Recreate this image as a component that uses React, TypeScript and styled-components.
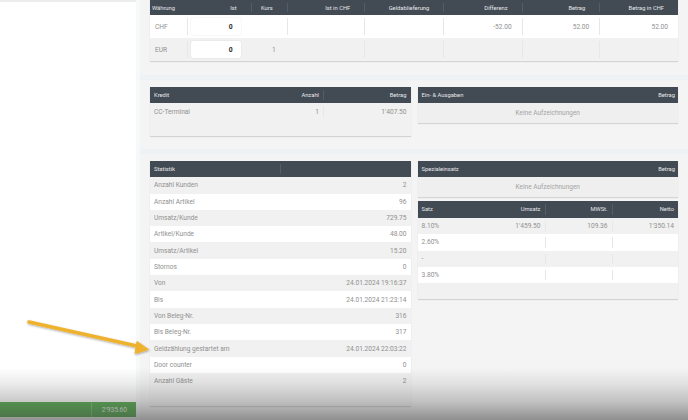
import styled, { createGlobalStyle } from "styled-components";

const GlobalStyle = createGlobalStyle`
  html, body {
    margin: 0;
    padding: 0;
  }
  body {
    width: 688px;
    height: 420px;
    overflow: hidden;
    font-family: Roboto, "Liberation Sans", sans-serif;
    background: #f6f8f9;
    color: #8b8b8b;
  }
  * {
    box-sizing: border-box;
  }
`;

const Page = styled.div`
  position: relative;
  display: flex;
  height: 420px;
  overflow: hidden;
`;

const Sidebar = styled.aside`
  width: 136px;
  flex: none;
  background: #fff;
  border-top: 2px solid #ececec;
  display: flex;
  flex-direction: column;
  justify-content: flex-end;
  padding-bottom: 3px;
`;

const TotalBar = styled.div`
  height: 15px;
  display: grid;
  grid-template-columns: 91px 1fr;
  background: #5cb055;
  color: #eef7ec;
  font-size: 6.6px;
`;

const TotalCell = styled.div`
  display: flex;
  align-items: center;
  justify-content: flex-end;
  padding-right: 9px;
  & + & {
    border-left: 1px solid rgba(255, 255, 255, 0.25);
  }
`;

const Gutter = styled.div`
  width: 4px;
  flex: none;
  background: #f6f9fa;
`;

const Main = styled.main`
  flex: 1;
  display: flex;
  flex-direction: column;
  gap: 5px;
  background: #eef2f4;
`;

const Section = styled.section<{ $pad: string }>`
  background: #f4f4f4;
  padding: ${(p) => p.$pad};
`;

const Split = styled.div`
  display: grid;
  grid-template-columns: 1fr 1fr;
  gap: 7px;
  align-items: start;
`;

const Stack = styled.div`
  display: flex;
  flex-direction: column;
  gap: 4px;
`;

const Card = styled.div<{ $padBottom?: number }>`
  background: #f1f1f1;
  box-shadow: 0 1px 1px rgba(0, 0, 0, 0.13);
  padding-bottom: ${(p) => p.$padBottom ?? 0}px;
`;

const HeadRow = styled.div<{ $cols: string; $h: number }>`
  display: grid;
  grid-template-columns: ${(p) => p.$cols};
  height: ${(p) => p.$h}px;
  background: #424a54;
  color: #e6e8ea;
  font-size: 5.8px;
  font-weight: 400;
`;

const HeadCell = styled.div<{ $right?: boolean; $pad?: number }>`
  position: relative;
  display: flex;
  align-items: center;
  justify-content: ${(p) => (p.$right ? "flex-end" : "flex-start")};
  padding: 0 ${(p) => (p.$right ? p.$pad ?? 4 : 0)}px 0 ${(p) => (p.$right ? 0 : p.$pad ?? 4)}px;
  white-space: nowrap;
  & + &::before {
    content: "";
    position: absolute;
    left: 0;
    top: 3px;
    bottom: 3px;
    width: 1px;
    background: #545c66;
  }
`;

const Row = styled.div<{ $cols: string; $h: number; $white?: boolean }>`
  display: grid;
  grid-template-columns: ${(p) => p.$cols};
  height: ${(p) => p.$h}px;
  background: ${(p) => (p.$white ? "#ffffff" : "#f1f1f1")};
  font-size: 6.6px;
  color: #909090;
`;

const Cell = styled.div<{ $right?: boolean; $pad?: number }>`
  position: relative;
  display: flex;
  align-items: center;
  justify-content: ${(p) => (p.$right ? "flex-end" : "flex-start")};
  padding: 0 ${(p) => (p.$right ? p.$pad ?? 4 : 0)}px 0 ${(p) => (p.$right ? 0 : p.$pad ?? 4)}px;
  white-space: nowrap;
  & + &::before {
    content: "";
    position: absolute;
    left: 0;
    top: 3px;
    bottom: 3px;
    width: 1px;
    background: #e7e7e7;
  }
`;

const InputCell = styled.div`
  display: flex;
  align-items: center;
  padding: 0 10px 0 4px;
  position: relative;
  &::before {
    content: "";
    position: absolute;
    left: 0;
    top: 3px;
    bottom: 3px;
    width: 1px;
    background: #e7e7e7;
  }
`;

const AmountInput = styled.input`
  width: 100%;
  height: 17px;
  border: 0;
  border-radius: 2px;
  background: #fff;
  box-shadow: 0 0 1.5px rgba(0, 0, 0, 0.14);
  text-align: right;
  padding: 0 8px 0 0;
  font-family: inherit;
  font-size: 6.8px;
  font-weight: 700;
  color: #2a2a2a;
  -webkit-text-fill-color: #2a2a2a;
  outline: none;
`;

const Empty = styled.div`
  height: 20px;
  display: flex;
  align-items: center;
  justify-content: center;
  background: #efefef;
  font-size: 6.5px;
  color: #a4a4a4;
`;

const Vignette = styled.div`
  position: absolute;
  left: 0;
  right: 0;
  bottom: 0;
  height: 52px;
  pointer-events: none;
  background: linear-gradient(
    to bottom,
    rgba(60, 60, 60, 0) 0%,
    rgba(60, 60, 60, 0.1) 30%,
    rgba(60, 60, 60, 0.28) 65%,
    rgba(60, 60, 60, 0.55) 100%
  );
`;

const ArrowLayer = styled.svg`
  position: absolute;
  left: 0;
  top: 0;
  pointer-events: none;
`;

const cashCols = "36.7px 64px 36px 77.6px 79px 78.4px 77.6px 1fr";
const half = "1fr 1fr";
const kreditCols = "87px 86px 1fr";
const vatCols = "60px 67px 67px 1fr";

const cashHead = ["Ist", "Kurs", "Ist in CHF", "Geldablieferung", "Differenz", "Betrag", "Betrag in CHF"];

const stats: [string, string][] = [
  ["Anzahl Kunden", "2"],
  ["Anzahl Artikel", "96"],
  ["Umsatz/Kunde", "729.75"],
  ["Artikel/Kunde", "48.00"],
  ["Umsatz/Artikel", "15.20"],
  ["Stornos", "0"],
  ["Von", "24.01.2024 19:16:37"],
  ["Bis", "24.01.2024 21:23:14"],
  ["Von Beleg-Nr.", "316"],
  ["Bis Beleg-Nr.", "317"],
  ["Geldzählung gestartet am", "24.01.2024 22:03:22"],
  ["Door counter", "0"],
  ["Anzahl Gäste", "2"],
];

const vat: string[][] = [
  ["8.10%", "1'459.50", "109.36", "1'350.14"],
  ["2.60%", "", "", ""],
  ["-", "", "", ""],
  ["3.80%", "", "", ""],
];

const CashTable = () => (
  <Card>
    <HeadRow $cols={cashCols} $h={15}>
      <HeadCell $pad={2}>Währung</HeadCell>
      {cashHead.map((h) => (
        <HeadCell key={h} $right $pad={14}>
          {h}
        </HeadCell>
      ))}
    </HeadRow>
    <Row $cols={cashCols} $h={23} $white>
      <Cell $pad={5}>CHF</Cell>
      <InputCell>
        <AmountInput readOnly defaultValue="0" />
      </InputCell>
      <Cell $right $pad={10} />
      <Cell $right $pad={10} />
      <Cell $right $pad={10} />
      <Cell $right $pad={10}>-52.00</Cell>
      <Cell $right $pad={10}>52.00</Cell>
      <Cell $right $pad={10}>52.00</Cell>
    </Row>
    <Row $cols={cashCols} $h={23}>
      <Cell $pad={5}>EUR</Cell>
      <InputCell>
        <AmountInput readOnly defaultValue="0" />
      </InputCell>
      <Cell $right $pad={11}>1</Cell>
      <Cell $right $pad={10} />
      <Cell $right $pad={10} />
      <Cell $right $pad={10} />
      <Cell $right $pad={10} />
      <Cell $right $pad={10} />
    </Row>
  </Card>
);

export default function App() {
  return (
    <>
      <GlobalStyle />
      <Page>
        <Sidebar>
          <TotalBar>
            <TotalCell />
            <TotalCell>2'935.60</TotalCell>
          </TotalBar>
        </Sidebar>
        <Gutter />
        <Main>
          <Section $pad="0 10px 14px">
            <CashTable />
          </Section>

          <Section $pad="6.7px 10px 13px">
            <Split>
              <Card $padBottom={16}>
                <HeadRow $cols={kreditCols} $h={16.6}>
                  <HeadCell>Kredit</HeadCell>
                  <HeadCell $right>Anzahl</HeadCell>
                  <HeadCell $right>Betrag</HeadCell>
                </HeadRow>
                <Row $cols={kreditCols} $h={17}>
                  <Cell>CC-Terminal</Cell>
                  <Cell $right>1</Cell>
                  <Cell $right>1'407.50</Cell>
                </Row>
              </Card>
              <Card>
                <HeadRow $cols={half} $h={16.6}>
                  <HeadCell>Ein- &amp; Ausgaben</HeadCell>
                  <HeadCell $right $pad={3}>Betrag</HeadCell>
                </HeadRow>
                <Empty>Keine Aufzeichnungen</Empty>
              </Card>
            </Split>
          </Section>

          <Section $pad="6.5px 10px 30px">
            <Split>
              <Card $padBottom={17}>
                <HeadRow $cols={half} $h={16.4}>
                  <HeadCell>Statistik</HeadCell>
                  <HeadCell />
                </HeadRow>
                {stats.map(([label, value], i) => (
                  <Row key={label} $cols={half} $h={16.33} $white={i % 2 === 1}>
                    <Cell>{label}</Cell>
                    <Cell $right>{value}</Cell>
                  </Row>
                ))}
              </Card>
              <Stack>
                <Card>
                  <HeadRow $cols={half} $h={16.4}>
                    <HeadCell>Spezialeinsatz</HeadCell>
                    <HeadCell $right $pad={3}>Betrag</HeadCell>
                  </HeadRow>
                  <Empty>Keine Aufzeichnungen</Empty>
                </Card>
                <Card $padBottom={16}>
                  <HeadRow $cols={vatCols} $h={16.6}>
                    <HeadCell>Satz</HeadCell>
                    <HeadCell $right>Umsatz</HeadCell>
                    <HeadCell $right>MWSt.</HeadCell>
                    <HeadCell $right>Netto</HeadCell>
                  </HeadRow>
                  {vat.map((r, i) => (
                    <Row key={r[0]} $cols={vatCols} $h={16.4} $white={i % 2 === 1}>
                      <Cell>{r[0]}</Cell>
                      <Cell $right>{r[1]}</Cell>
                      <Cell $right>{r[2]}</Cell>
                      <Cell $right>{r[3]}</Cell>
                    </Row>
                  ))}
                </Card>
              </Stack>
            </Split>
          </Section>
        </Main>

        <ArrowLayer width="688" height="420" viewBox="0 0 688 420">
          <defs>
            <filter id="arrowShadow" x="-10%" y="-30%" width="120%" height="160%">
              <feDropShadow dx="0.5" dy="1" stdDeviation="0.8" floodColor="#000" floodOpacity="0.35" />
            </filter>
          </defs>
          <g filter="url(#arrowShadow)" fill="#efb22e" stroke="#efb22e">
            <line x1="29" y1="322" x2="137" y2="346" strokeWidth="3.6" strokeLinecap="round" />
            <polygon points="148.5,349.5 135,353.5 137,341.5" strokeWidth="1" strokeLinejoin="round" />
          </g>
        </ArrowLayer>
        <Vignette />
      </Page>
    </>
  );
}
